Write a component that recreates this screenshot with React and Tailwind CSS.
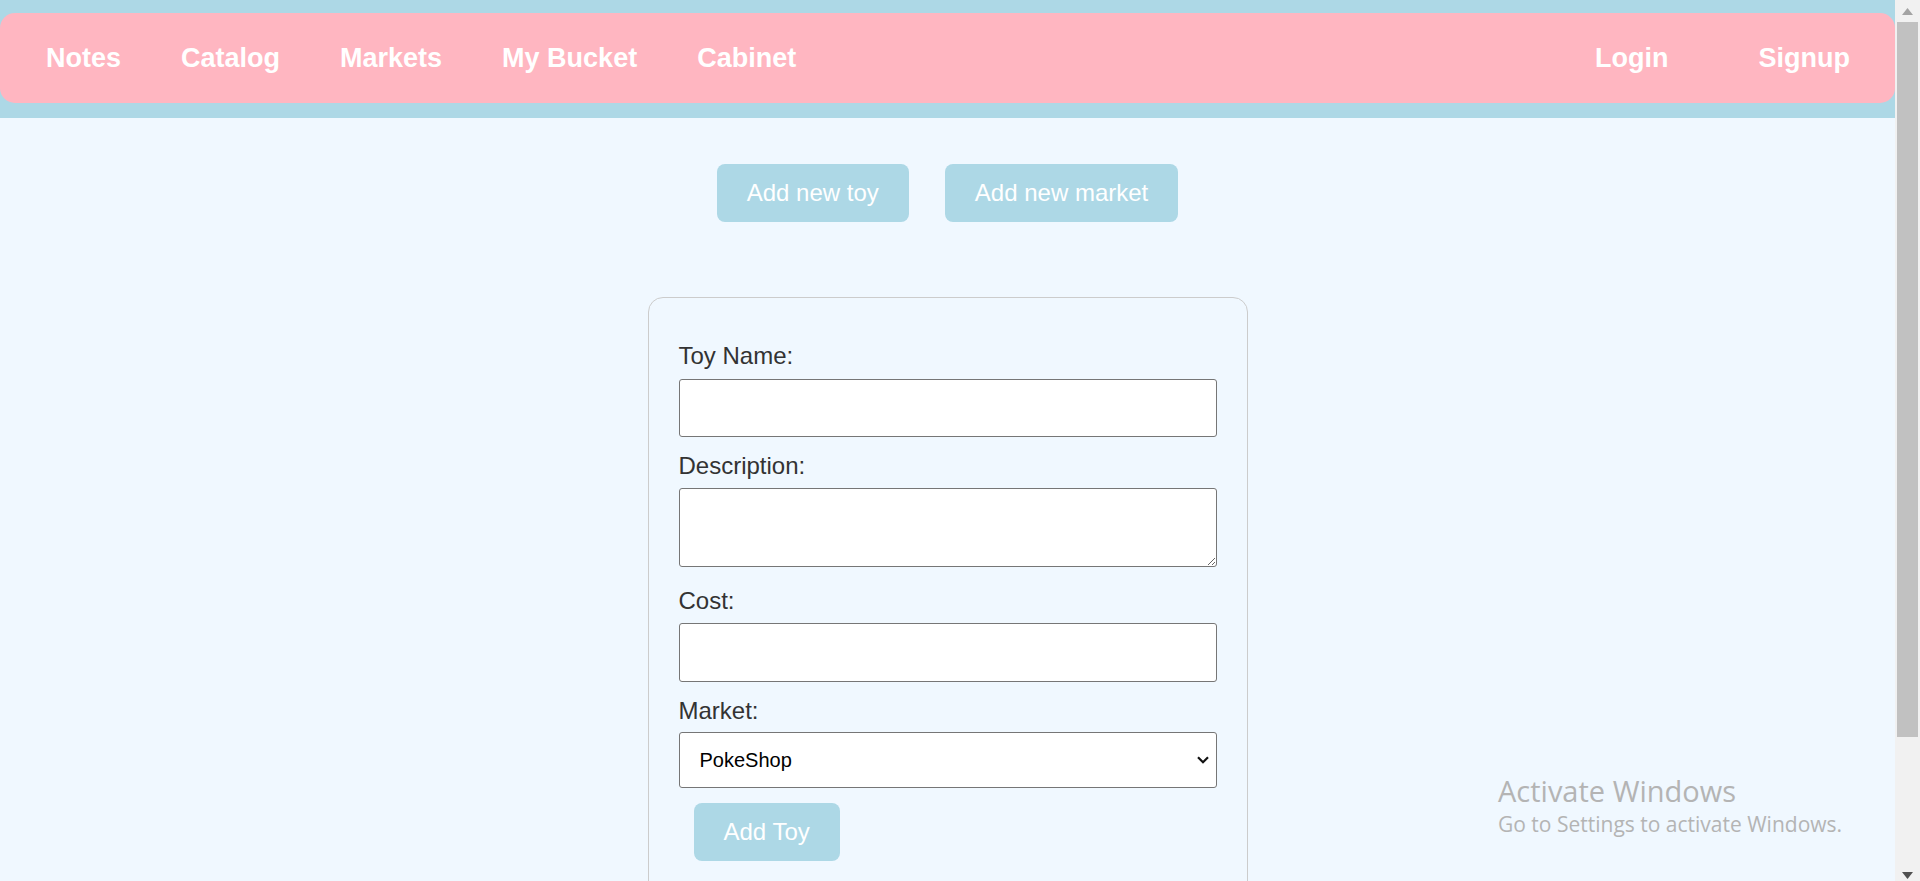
import React from "react";

function Label({ children }) {
  return (
    <label className="block h-[28px] leading-[28px] text-[24px] text-[#333333]">
      {children}
    </label>
  );
}

export default function App() {
  return (
    <div className="flex h-screen w-full overflow-hidden bg-[#f0f8ff] font-['Liberation_Sans',Arial,sans-serif]">
      <div className="relative flex min-w-0 flex-1 flex-col">
        <header className="bg-[#add8e6] pt-[13px] pb-[15px]">
          <nav className="flex h-[90px] items-center justify-between rounded-[15px] bg-[#ffb6c1] pl-[46px] pr-[45px] text-[27px] font-bold text-white">
            <div className="flex gap-[60px]">
              <a>Notes</a>
              <a>Catalog</a>
              <a>Markets</a>
              <a>My Bucket</a>
              <a>Cabinet</a>
            </div>
            <div className="flex gap-[90px]">
              <a>Login</a>
              <a>Signup</a>
            </div>
          </nav>
        </header>

        <main className="flex flex-col items-center">
          <div className="mt-[46px] flex gap-[36px]">
            <button className="h-[58px] rounded-[8px] bg-[#add8e6] px-[30px] text-[24px] text-white">
              Add new toy
            </button>
            <button className="h-[58px] rounded-[8px] bg-[#add8e6] px-[30px] text-[24px] text-white">
              Add new market
            </button>
          </div>

          <form className="mt-[75px] w-[600px] shrink-0 rounded-[15px] border border-[#cccccc] px-[30px] pt-[44px] pb-[80px]">
            <Label>Toy Name:</Label>
            <input
              type="text"
              className="mt-[9px] block h-[58px] w-full rounded-[3px] border border-[#767676] bg-white"
            />
            <div className="mt-[15px]">
              <Label>Description:</Label>
            </div>
            <textarea className="mt-[8px] block h-[79px] w-full rounded-[3px] border border-[#767676] bg-white" />
            <div className="mt-[20px]">
              <Label>Cost:</Label>
            </div>
            <input
              type="text"
              className="mt-[8px] block h-[59px] w-full rounded-[3px] border border-[#767676] bg-white"
            />
            <div className="mt-[15px]">
              <Label>Market:</Label>
            </div>
            <div className="relative mt-[7px]">
              <select className="block h-[56px] w-full appearance-none rounded-[3px] border border-[#767676] bg-white pl-[20px] text-[20px] text-black">
                <option>PokeShop</option>
              </select>
              <svg
                className="pointer-events-none absolute right-[8px] top-[24px]"
                width="12"
                height="8"
                viewBox="0 0 12 8"
              >
                <path d="M1 1.2 L6 6.2 L11 1.2" fill="none" stroke="#111" strokeWidth="2.2" />
              </svg>
            </div>
            <button
              type="button"
              className="mt-[15px] ml-[15px] h-[58px] rounded-[8px] bg-[#add8e6] px-[30px] text-[24px] text-white"
            >
              Add Toy
            </button>
          </form>
        </main>

        <div className="pointer-events-none absolute left-[1498px] top-[776px] font-['Open_Sans',sans-serif] text-[#b4b4b4]">
          <div className="text-[29px] leading-[29px]">Activate Windows</div>
          <div className="mt-[9px] text-[21px] leading-[21px]">Go to Settings to activate Windows.</div>
        </div>
      </div>

      <div className="flex w-[25px] shrink-0 flex-col bg-[#f1f1f1]">
        <div className="flex h-[22px] items-center justify-center">
          <svg width="11" height="7" viewBox="0 0 11 7">
            <path d="M5.5 0 L11 7 H0 Z" fill="#a3a3a3" />
          </svg>
        </div>
        <div className="mx-[2px] h-[715px] bg-[#c1c1c1]" />
        <div className="flex-1" />
        <div className="flex h-[17px] justify-center pt-[8px]">
          <svg width="11" height="7" viewBox="0 0 11 7">
            <path d="M0 0 H11 L5.5 7 Z" fill="#505050" />
          </svg>
        </div>
      </div>
    </div>
  );
}
